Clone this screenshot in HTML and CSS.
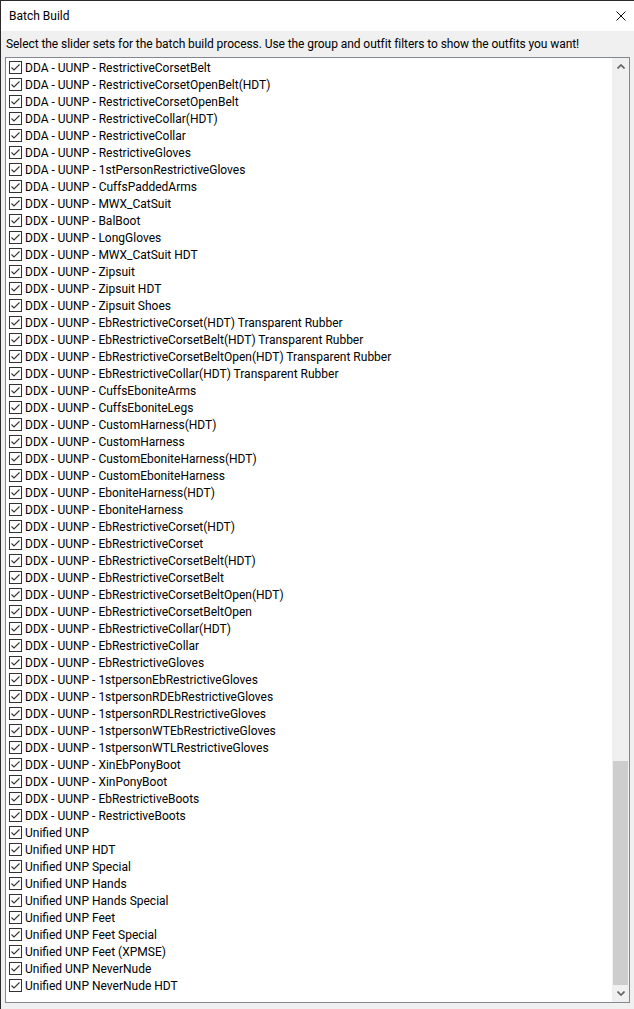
FILE: index.html
```html
<!DOCTYPE html>
<html lang="en">
<head>
  <meta charset="UTF-8">
  <meta name="viewport" content="width=device-width, initial-scale=1.0">
  <title>Batch Build</title>
  <link rel="stylesheet" href="styles.css">
</head>
<body>
  <div class="window">
    <div class="titlebar">
      <span class="title">Batch Build</span>
      <svg class="close" width="10" height="10" viewBox="0 0 10 10">
        <path d="M0.5 0.5 L9.5 9.5 M9.5 0.5 L0.5 9.5" stroke="#111" stroke-width="1" fill="none"/>
      </svg>
    </div>

    <div class="content">
      <p class="desc">Select the slider sets for the batch build process. Use the group and outfit filters to show the outfits you want!</p>

      <div class="listbox">
        <div class="rows" id="rows"></div>
        <div class="scrollbar">
          <div class="sb-btn">
            <svg width="8" height="5" viewBox="0 0 8 5"><path d="M0.5 4.5 L4 1 L7.5 4.5" stroke="#606060" stroke-width="1.6" fill="none"/></svg>
          </div>
          <div class="sb-track"><div class="sb-thumb"></div></div>
          <div class="sb-btn">
            <svg width="8" height="5" viewBox="0 0 8 5"><path d="M0.5 0.5 L4 4 L7.5 0.5" stroke="#606060" stroke-width="1.6" fill="none"/></svg>
          </div>
        </div>
      </div>
    </div>
  </div>

  <script>
    const sets = [
      'DDA - UUNP - RestrictiveCorsetBelt',
      'DDA - UUNP - RestrictiveCorsetOpenBelt(HDT)',
      'DDA - UUNP - RestrictiveCorsetOpenBelt',
      'DDA - UUNP - RestrictiveCollar(HDT)',
      'DDA - UUNP - RestrictiveCollar',
      'DDA - UUNP - RestrictiveGloves',
      'DDA - UUNP - 1stPersonRestrictiveGloves',
      'DDA - UUNP - CuffsPaddedArms',
      'DDX - UUNP - MWX_CatSuit',
      'DDX - UUNP - BalBoot',
      'DDX - UUNP - LongGloves',
      'DDX - UUNP - MWX_CatSuit HDT',
      'DDX - UUNP - Zipsuit',
      'DDX - UUNP - Zipsuit HDT',
      'DDX - UUNP - Zipsuit Shoes',
      'DDX - UUNP - EbRestrictiveCorset(HDT) Transparent Rubber',
      'DDX - UUNP - EbRestrictiveCorsetBelt(HDT) Transparent Rubber',
      'DDX - UUNP - EbRestrictiveCorsetBeltOpen(HDT) Transparent Rubber',
      'DDX - UUNP - EbRestrictiveCollar(HDT) Transparent Rubber',
      'DDX - UUNP - CuffsEboniteArms',
      'DDX - UUNP - CuffsEboniteLegs',
      'DDX - UUNP - CustomHarness(HDT)',
      'DDX - UUNP - CustomHarness',
      'DDX - UUNP - CustomEboniteHarness(HDT)',
      'DDX - UUNP - CustomEboniteHarness',
      'DDX - UUNP - EboniteHarness(HDT)',
      'DDX - UUNP - EboniteHarness',
      'DDX - UUNP - EbRestrictiveCorset(HDT)',
      'DDX - UUNP - EbRestrictiveCorset',
      'DDX - UUNP - EbRestrictiveCorsetBelt(HDT)',
      'DDX - UUNP - EbRestrictiveCorsetBelt',
      'DDX - UUNP - EbRestrictiveCorsetBeltOpen(HDT)',
      'DDX - UUNP - EbRestrictiveCorsetBeltOpen',
      'DDX - UUNP - EbRestrictiveCollar(HDT)',
      'DDX - UUNP - EbRestrictiveCollar',
      'DDX - UUNP - EbRestrictiveGloves',
      'DDX - UUNP - 1stpersonEbRestrictiveGloves',
      'DDX - UUNP - 1stpersonRDEbRestrictiveGloves',
      'DDX - UUNP - 1stpersonRDLRestrictiveGloves',
      'DDX - UUNP - 1stpersonWTEbRestrictiveGloves',
      'DDX - UUNP - 1stpersonWTLRestrictiveGloves',
      'DDX - UUNP - XinEbPonyBoot',
      'DDX - UUNP - XinPonyBoot',
      'DDX - UUNP - EbRestrictiveBoots',
      'DDX - UUNP - RestrictiveBoots',
      'Unified UNP',
      'Unified UNP HDT',
      'Unified UNP Special',
      'Unified UNP Hands',
      'Unified UNP Hands Special',
      'Unified UNP Feet',
      'Unified UNP Feet Special',
      'Unified UNP Feet (XPMSE)',
      'Unified UNP NeverNude',
      'Unified UNP NeverNude HDT'
    ];

    const rows = document.getElementById('rows');
    const check = '<svg class="check" width="13" height="13" viewBox="0 0 13 13">' +
      '<rect x="0.5" y="0.5" width="12" height="12" fill="#fff" stroke="#333"/>' +
      '<path d="M2.5 6.5 L5 9 L10.5 3.5" stroke="#333" stroke-width="1.1" fill="none"/></svg>';

    sets.forEach(name => {
      const row = document.createElement('div');
      row.className = 'row';
      row.innerHTML = check + '<span></span>';
      row.querySelector('span').textContent = name;
      rows.appendChild(row);
    });
  </script>
</body>
</html>
```

FILE: styles.css
```css
body {
  margin: 0;
  background: #f0f0f0;
  font-family: Roboto, 'Liberation Sans', Arial, sans-serif;
  font-size: 12px;
  color: #000;
}

.window {
  width: 634px;
  height: 1009px;
  box-sizing: border-box;
  border-top: 1px solid #2a2a2a;
  border-left: 1px solid #2a2a2a;
  display: flex;
  flex-direction: column;
  background: #f0f0f0;
  overflow: hidden;
}

.titlebar {
  height: 30px;
  flex-shrink: 0;
  background: #fff;
  display: flex;
  align-items: center;
  justify-content: space-between;
  padding: 0 8px 0 8px;
}

.title {
  color: #000;
}

.content {
  flex: 1;
  display: flex;
  flex-direction: column;
  padding: 0 4px 0 4px;
}

.desc {
  margin: 5px 0 5px 0;
  padding-left: 1px;
  line-height: 16px;
  letter-spacing: -0.07px;
  white-space: nowrap;
}

.listbox {
  height: 946px;
  box-sizing: border-box;
  border: 1px solid #828790;
  background: #fff;
  display: flex;
}

.rows {
  flex: 1;
  overflow: hidden;
  padding-top: 1px;
}

.row {
  height: 17px;
  display: flex;
  align-items: center;
  gap: 3px;
  padding-left: 3px;
  white-space: nowrap;
}

.check {
  flex-shrink: 0;
  display: block;
}

.scrollbar {
  width: 17px;
  background: #f0f0f0;
  display: flex;
  flex-direction: column;
}

.sb-btn {
  height: 17px;
  display: flex;
  align-items: center;
  justify-content: center;
}

.sb-track {
  flex: 1;
  display: flex;
  flex-direction: column;
  justify-content: flex-end;
}

.sb-thumb {
  height: 224px;
  margin: 0 1px;
  background: #cdcdcd;
}
```
